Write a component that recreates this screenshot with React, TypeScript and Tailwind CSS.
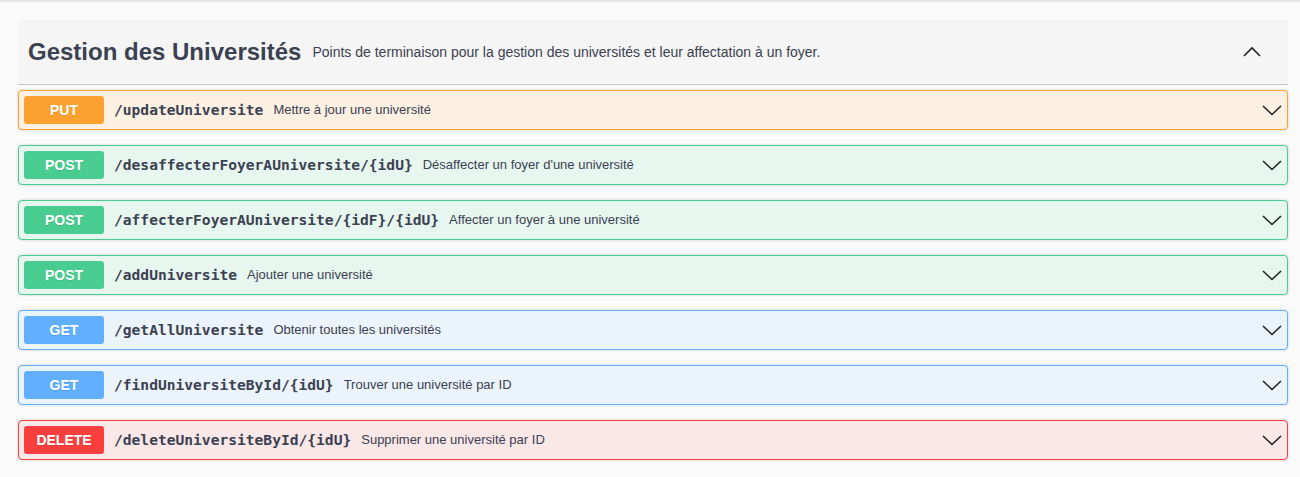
import React from "react";

type Op = {
  method: "PUT" | "POST" | "GET" | "DELETE";
  path: string;
  summary: string;
};

const ops: Op[] = [
  { method: "PUT", path: "/updateUniversite", summary: "Mettre à jour une université" },
  { method: "POST", path: "/desaffecterFoyerAUniversite/{idU}", summary: "Désaffecter un foyer d'une université" },
  { method: "POST", path: "/affecterFoyerAUniversite/{idF}/{idU}", summary: "Affecter un foyer à une université" },
  { method: "POST", path: "/addUniversite", summary: "Ajouter une université" },
  { method: "GET", path: "/getAllUniversite", summary: "Obtenir toutes les universités" },
  { method: "GET", path: "/findUniversiteById/{idU}", summary: "Trouver une université par ID" },
  { method: "DELETE", path: "/deleteUniversiteById/{idU}", summary: "Supprimer une université par ID" },
];

const styles = {
  PUT: { row: "border-[#fca130] bg-[#fcf0e3]", badge: "bg-[#fca130]" },
  POST: { row: "border-[#49cc90] bg-[#e8f6f0]", badge: "bg-[#49cc90]" },
  GET: { row: "border-[#61affe] bg-[#ebf3fb]", badge: "bg-[#61affe]" },
  DELETE: { row: "border-[#f93e3e] bg-[#fae7e7]", badge: "bg-[#f93e3e]" },
};

function Chevron({ up }: { up?: boolean }) {
  return (
    <svg width="20" height="20" viewBox="0 0 20 20" className="shrink-0">
      <path
        d={up ? "M2 14 L10 6 L18 14" : "M1 6 L10 14.5 L19 6"}
        fill="none"
        stroke="#222"
        strokeWidth="1.6"
      />
    </svg>
  );
}

function OpRow({ op }: { op: Op }) {
  const s = styles[op.method];
  return (
    <div
      className={`flex items-center rounded-[4px] border p-[5px] shadow-[0_0_3px_rgba(0,0,0,0.19)] ${s.row}`}
    >
      <span
        className={`w-[80px] h-[28px] flex items-center justify-center rounded-[3px] text-white text-[14px] font-bold [text-shadow:0_1px_0_rgba(0,0,0,0.1)] ${s.badge}`}
      >
        {op.method}
      </span>
      <span className="px-[10px] text-[14.6px] font-bold text-[#3b4151] font-['DejaVu_Sans_Mono',monospace]">
        {op.path}
      </span>
      <span className="flex-1 text-[13px] text-[#3b4151]">{op.summary}</span>
      <Chevron />
    </div>
  );
}

export default function App() {
  return (
    <div className="min-h-[477px] bg-[#fafafa] border-t-2 border-[#e6e6e6] font-['Liberation_Sans',Arial,sans-serif]">
      <div className="pl-[18px] pr-[12px] pt-[18px]">
        {/* Tag header */}
        <div className="flex items-center h-[65px] bg-[#f5f5f5] border-b border-[#c4c6cb] pl-[10px] pr-[26px]">
          <h3 className="text-[24px] font-bold text-[#3b4151] leading-none">
            Gestion des Universités
          </h3>
          <span className="ml-[11px] flex-1 text-[14px] text-[#3b4151]">
            Points de terminaison pour la gestion des universités et leur affectation à un foyer.
          </span>
          <Chevron up />
        </div>

        {/* Operations */}
        <div className="flex flex-col gap-[15px] pt-[5px] pb-[17px]">
          {ops.map((op) => (
            <OpRow key={op.path} op={op} />
          ))}
        </div>
      </div>
    </div>
  );
}
